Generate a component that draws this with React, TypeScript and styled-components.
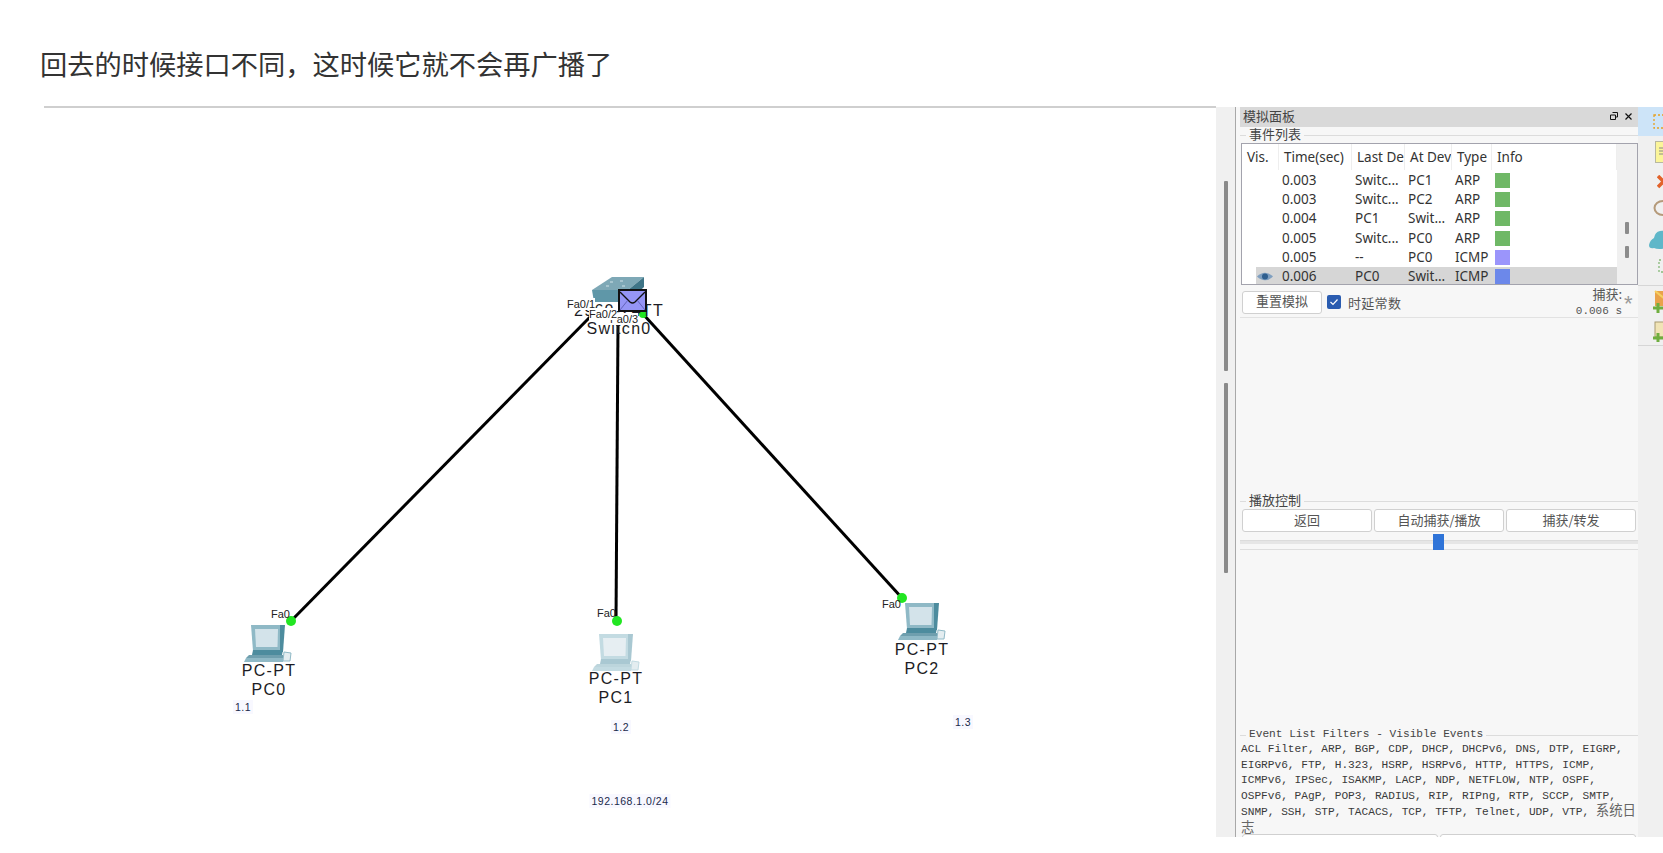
import React from 'react';
import styled, { createGlobalStyle } from 'styled-components';

const GlobalStyle = createGlobalStyle`
  html, body {
    margin: 0;
    padding: 0;
    background: #fff;
  }
  body {
    font-family: "Liberation Sans", "Noto Sans CJK SC", sans-serif;
  }
`;

const CJK = `"Noto Sans CJK SC", sans-serif`;

const Page = styled.div`
  width: 1663px;
  height: 853px;
  overflow: hidden;
  background: #fff;
`;

const Title = styled.h1`
  margin: 0;
  height: 106px;
  padding: 43px 0 0 40px;
  box-sizing: border-box;
  font: 400 27.25px/40px ${CJK};
  color: #333;
`;

const Shot = styled.div`
  margin-left: 44px;
  height: 731px;
  display: flex;
`;

/* free canvas of the simulator, page coords minus 44/108 */
const Canvas = styled.div`
  position: relative;
  width: 1172px;
  border-top: 2px solid #cfcfcf;
  background: #fff;
`;

const Cables = styled.svg`
  position: absolute;
  left: 0;
  top: 0;
`;

const At = styled.div<{ $x: number; $y: number }>`
  position: absolute;
  left: ${(p) => p.$x - 44}px;
  top: ${(p) => p.$y - 108}px;
  line-height: 0;
`;

const PortLabel = styled.span<{ $x: number; $y: number; $bg?: boolean }>`
  position: absolute;
  left: ${(p) => p.$x - 44}px;
  top: ${(p) => p.$y - 108 - 6}px;
  font-size: 11px;
  line-height: 12px;
  color: #222;
  background: ${(p) => (p.$bg ? '#fff' : 'transparent')};
`;

const DeviceLabel = styled.span<{ $x: number; $y: number }>`
  position: absolute;
  left: ${(p) => p.$x - 44}px;
  top: ${(p) => p.$y - 108 - 10}px;
  transform: translateX(-50%);
  font-size: 16px;
  line-height: 20px;
  letter-spacing: 1.3px;
  color: #1c1c24;
  white-space: nowrap;
`;

const Note = styled.span<{ $x: number; $y: number }>`
  position: absolute;
  left: ${(p) => p.$x - 44}px;
  top: ${(p) => p.$y - 108 - 8}px;
  transform: translateX(-50%);
  font-size: 10.5px;
  line-height: 14px;
  letter-spacing: 0.5px;
  padding: 0 2px;
  background: #f8f8ff;
  color: #1a2a4a;
  white-space: nowrap;
`;

const Gutter = styled.div`
  width: 19px;
  margin-top: 1px;
  background: #f0f0f0;
  border-right: 1px solid #a8a8a8;
  display: flex;
  flex-direction: column;
  align-items: center;
  padding-top: 74px;
  gap: 12px;
`;

const GutterThumb = styled.div`
  width: 4px;
  height: 190px;
  background: #8a8a8a;
  border-radius: 1px;
`;

const Panel = styled.div`
  width: 402px;
  margin-top: 1px;
  padding-left: 4px;
  box-sizing: border-box;
  background: #f7f7f7;
  display: flex;
  flex-direction: column;
  overflow: hidden;
  font-family: ${CJK};
  color: #555;
`;

const TitleBar = styled.div`
  flex: none;
  height: 20px;
  background: #d9d9d9;
  display: flex;
  align-items: center;
  justify-content: space-between;
  padding: 0 6px 2px 3px;
  box-sizing: border-box;
  font-size: 13px;
  line-height: 16px;
  color: #444;
`;

const WinButtons = styled.div`
  display: flex;
  align-items: center;
  gap: 7px;
  line-height: 0;
`;

const Legend = styled.div<{ $mono?: boolean }>`
  flex: none;
  height: 16px;
  display: flex;
  align-items: center;
  gap: 3px;
  font-size: ${(p) => (p.$mono ? '11.17px' : '13px')};
  font-family: ${(p) => (p.$mono ? '"Liberation Mono", monospace' : CJK)};
  color: #444;
  &::before {
    content: '';
    width: 6px;
    height: 1px;
    background: #dcdcdc;
  }
  &::after {
    content: '';
    flex: 1;
    height: 1px;
    background: #dcdcdc;
  }
`;

const LegendText = styled.span`
  line-height: 14px;
  margin-top: -3px;
`;

const EventTable = styled.div`
  flex: none;
  height: 142px;
  box-sizing: border-box;
  border: 1px solid #a3a3ad;
  margin-left: 1px;
  display: flex;
  background: #fff;
  overflow: hidden;
`;

const Rows = styled.div`
  width: 375px;
  font-family: "Noto Sans", sans-serif;
  font-size: 13.5px;
  color: #333;
`;

const Grid = styled.div<{ $active?: boolean }>`
  display: grid;
  grid-template-columns: 37px 73px 53px 47px 40px 125px;
  align-items: center;
  height: 19.2px;
  background: ${(p) => (p.$active ? 'linear-gradient(90deg, #fff 14px, #d6d6d6 14px)' : 'transparent')};
`;

const HeadRow = styled(Grid)`
  height: 26px;
  margin-bottom: 1px;
`;

const Head = styled.div`
  height: 100%;
  display: flex;
  align-items: center;
  padding-left: 5px;
  overflow: hidden;
  white-space: nowrap;
  border-right: 1px solid #eee;
  box-sizing: border-box;
`;

const Cell = styled.div`
  padding-left: 3px;
  white-space: nowrap;
  overflow: hidden;
  line-height: 19px;
`;

const VisCell = styled.div`
  padding-left: 15px;
  line-height: 0;
`;

const Swatch = styled.div<{ $c: string }>`
  width: 15px;
  height: 15px;
  margin-left: 3px;
  background: ${(p) => p.$c};
`;

const RailBar = styled.div`
  flex: 1;
  background: #f0f0f0;
  display: flex;
  flex-direction: column;
  align-items: center;
  padding-top: 78px;
  gap: 12px;
`;

const RailThumb = styled.div`
  width: 4px;
  height: 12px;
  background: #8c8c8c;
  border-radius: 1px;
`;

const ControlRow = styled.div`
  flex: none;
  height: 33px;
  box-sizing: border-box;
  border-bottom: 1px solid #e2e2e2;
  display: flex;
  align-items: center;
  padding: 2px 3px 0 2px;
  font-size: 13px;
`;

const PanelButton = styled.div`
  flex: 1;
  height: 23px;
  box-sizing: border-box;
  background: #fff;
  border: 1px solid #d0d0d0;
  border-radius: 3px;
  display: flex;
  align-items: center;
  justify-content: center;
  padding-bottom: 2px;
  font-size: 13px;
  line-height: 16px;
  color: #555;
`;

const ResetButton = styled(PanelButton)`
  flex: none;
  width: 80px;
`;

const Check = styled.div`
  width: 14px;
  height: 14px;
  margin-left: 5px;
  background: #2a5cb0;
  border-radius: 2px;
  display: flex;
  align-items: center;
  justify-content: center;
  line-height: 0;
`;

const CheckLabel = styled.span`
  margin-left: 7px;
  letter-spacing: 0.3px;
`;

const Readout = styled.div`
  margin-left: auto;
  text-align: right;
  font-size: 13px;
  line-height: 15px;
`;

const ReadoutValue = styled.div`
  margin-top: 3px;
  font-family: "Liberation Mono", monospace;
  font-size: 11px;
`;

const Star = styled.span`
  margin-left: 2px;
  width: 11px;
  color: #999;
  font: 22px/20px "Liberation Sans", sans-serif;
  padding-top: 4px;
`;

const Space = styled.div<{ $h: number }>`
  flex: none;
  height: ${(p) => p.$h}px;
`;

const ButtonRow = styled.div`
  flex: none;
  display: flex;
  gap: 2px;
  padding: 0 2px;
`;

const SliderBox = styled.div`
  flex: none;
  position: relative;
  height: 16px;
  margin-top: 2px;
  box-sizing: border-box;
  border-bottom: 1px solid #dedede;
  display: flex;
  flex-direction: column;
  padding-top: 6px;
`;

const SliderTrack = styled.div`
  height: 3px;
  background: #e6e6e6;
  border-top: 1px solid #dcdcdc;
`;

const SliderKnob = styled.div`
  position: absolute;
  left: 193px;
  top: 0;
  width: 11px;
  height: 16px;
  background: #2f74d8;
`;

const FilterText = styled.div`
  flex: none;
  height: 92px;
  margin-top: -1px;
  padding-left: 1px;
  font-family: "Liberation Mono", "Noto Sans CJK SC", monospace;
  font-size: 11.17px;
  line-height: 15.5px;
  color: #3a3a3a;
  white-space: pre;
`;

const CjkTail = styled.span`
  font-family: ${CJK};
  font-size: 13.4px;
  line-height: 10px;
  color: #666;
`;

const TailButton = styled(PanelButton)`
  flex: 1;
`;

const Toolbar = styled.div`
  width: 25px;
  margin-top: 1px;
  background: #f0f0f0;
  overflow: hidden;
`;

const Tool = styled.div<{ $h: number; $pl: number; $active?: boolean; $rule?: boolean }>`
  height: ${(p) => p.$h}px;
  padding-left: ${(p) => p.$pl}px;
  box-sizing: border-box;
  display: flex;
  align-items: center;
  line-height: 0;
  background: ${(p) => (p.$active ? '#cde4f8' : 'transparent')};
  border-bottom: ${(p) => (p.$rule ? '1px solid #d6d6d6' : 'none')};
  & > svg {
    flex: none;
  }
`;

const PcIcon = ({ faded = false }: { faded?: boolean }) => {
  const dark = faded ? '#a9c8d2' : '#4d8c9e';
  const mid = faded ? '#c3dbe2' : '#8fb9c6';
  const screen = faded ? '#e6eef2' : '#d3e3ea';
  const base = faded ? '#bcd5dc' : '#6f9fae';
  return (
    <svg width="50" height="40" viewBox="0 0 50 40">
      <path d="M8 2 H38 V28 H10 Z" fill={mid} />
      <path d="M37 2 H42 L40 29 H37 Z" fill={dark} />
      <path d="M12 6 H35 L34.5 24 H13 Z" fill={screen} />
      <path d="M10 27 H40 L39 32 H9 Z" fill={dark} />
      <path d="M6 32 H40 V35 H3 Z" fill={base} />
      <path d="M1 39 L3 35 H40 V39 Z" fill={mid} />
      <path d="M41 29 L48 30 L47 38 H40 Z" fill="#e4edf0" stroke={mid} strokeWidth="1" />
    </svg>
  );
};

const SwitchIcon = () => (
  <svg width="52" height="25" viewBox="0 0 52 25">
    <path d="M0 13 L20 0 H52 L36 13 Z" fill="#7ea8b6" />
    <path d="M0 13 H36 V25 H2 Z" fill="#5f97a8" />
    <path d="M36 13 L52 0 V10 L36 25 Z" fill="#3f7587" />
    <path d="M18 5 h3 M28 4 h3 M14 9 h3 M30 9 h3" stroke="#cfe2e8" strokeWidth="1" />
  </svg>
);

const Envelope = () => (
  <svg width="29" height="23" viewBox="0 0 29 23">
    <rect x="1" y="1" width="27" height="21" fill="#9595f5" stroke="#111" strokeWidth="2" />
    <path d="M2 3 L12 13 Q14.5 15 17 13 L27 3" fill="none" stroke="#111" strokeWidth="1.4" />
    <path d="M2 21 L10 11 M27 21 L19 11" stroke="#5555aa" strokeWidth="0.8" />
  </svg>
);

const EyeIcon = () => (
  <svg width="16" height="11" viewBox="0 0 16 11">
    <path d="M0 5.5 Q8 -2 16 5.5 Q8 13 0 5.5 Z" fill="#7f9fc0" />
    <circle cx="8" cy="5.5" r="3" fill="#2f5f8f" />
  </svg>
);

const events = [
  { time: '0.003', last: 'Switc...', at: 'PC1', type: 'ARP', color: '#6fb866' },
  { time: '0.003', last: 'Switc...', at: 'PC2', type: 'ARP', color: '#6fb866' },
  { time: '0.004', last: 'PC1', at: 'Swit...', type: 'ARP', color: '#6fb866' },
  { time: '0.005', last: 'Switc...', at: 'PC0', type: 'ARP', color: '#6fb866' },
  { time: '0.005', last: '--', at: 'PC0', type: 'ICMP', color: '#9b95fb' },
  { time: '0.006', last: 'PC0', at: 'Swit...', type: 'ICMP', color: '#6c88ea', active: true },
];

const filters = `ACL Filter, ARP, BGP, CDP, DHCP, DHCPv6, DNS, DTP, EIGRP,
EIGRPv6, FTP, H.323, HSRP, HSRPv6, HTTP, HTTPS, ICMP,
ICMPv6, IPSec, ISAKMP, LACP, NDP, NETFLOW, NTP, OSPF,
OSPFv6, PAgP, POP3, RADIUS, RIP, RIPng, RTP, SCCP, SMTP,
SNMP, SSH, STP, TACACS, TCP, TFTP, Telnet, UDP, VTP, `;

const App = () => {
  return (
    <Page>
      <GlobalStyle />
      <Title>回去的时候接口不同，这时候它就不会再广播了</Title>
      <Shot>
        <Canvas>
          <Cables width="1172" height="729" viewBox="44 108 1172 729">
            <g stroke="#000" strokeWidth="3" fill="none">
              <line x1="291" y1="621" x2="590" y2="317" />
              <line x1="616" y1="621" x2="618" y2="325" />
              <line x1="902" y1="598" x2="643" y2="314" />
            </g>
            <g fill="#22e622">
              <circle cx="291" cy="621" r="5" />
              <circle cx="617" cy="621" r="5" />
              <circle cx="902" cy="598" r="5" />
              <circle cx="643" cy="314" r="4" />
            </g>
          </Cables>

          <At $x={592} $y={277}><SwitchIcon /></At>
          <DeviceLabel $x={619} $y={311}>2960-24TT</DeviceLabel>
          <DeviceLabel $x={619} $y={329}>Switch0</DeviceLabel>
          <PortLabel $x={567} $y={304} $bg>Fa0/1</PortLabel>
          <PortLabel $x={610} $y={319} $bg>Fa0/3</PortLabel>
          <PortLabel $x={589} $y={314} $bg>Fa0/2</PortLabel>
          <At $x={618} $y={289}><Envelope /></At>

          <At $x={243} $y={623}><PcIcon /></At>
          <PortLabel $x={271} $y={614}>Fa0</PortLabel>
          <DeviceLabel $x={269} $y={671}>PC-PT</DeviceLabel>
          <DeviceLabel $x={269} $y={690}>PC0</DeviceLabel>
          <Note $x={243} $y={708}>1.1</Note>

          <At $x={591} $y={632}><PcIcon faded /></At>
          <PortLabel $x={597} $y={613}>Fa0</PortLabel>
          <DeviceLabel $x={616} $y={679}>PC-PT</DeviceLabel>
          <DeviceLabel $x={616} $y={698}>PC1</DeviceLabel>
          <Note $x={621} $y={728}>1.2</Note>

          <At $x={897} $y={601}><PcIcon /></At>
          <PortLabel $x={882} $y={604}>Fa0</PortLabel>
          <DeviceLabel $x={922} $y={650}>PC-PT</DeviceLabel>
          <DeviceLabel $x={922} $y={669}>PC2</DeviceLabel>
          <Note $x={963} $y={723}>1.3</Note>

          <Note $x={630} $y={802}>192.168.1.0/24</Note>
        </Canvas>

        <Gutter>
          <GutterThumb />
          <GutterThumb />
        </Gutter>

        <Panel>
          <TitleBar>
            <span>模拟面板</span>
            <WinButtons>
              <svg width="8" height="8" viewBox="0 0 8 8">
                <path d="M2.5 .5 H7.5 V5 H5.5 M.5 3 H5.5 V7.5 H.5 Z" fill="none" stroke="#111" />
              </svg>
              <svg width="7" height="7" viewBox="0 0 7 7">
                <path d="M.5 .5 L6.5 6.5 M6.5 .5 L.5 6.5" stroke="#111" strokeWidth="1.2" />
              </svg>
            </WinButtons>
          </TitleBar>

          <Legend><LegendText>事件列表</LegendText></Legend>
          <EventTable>
            <Rows>
              <HeadRow>
                <Head>Vis.</Head>
                <Head>Time(sec)</Head>
                <Head>Last De</Head>
                <Head>At Dev</Head>
                <Head>Type</Head>
                <Head>Info</Head>
              </HeadRow>
              {events.map((e, i) => (
                <Grid key={i} $active={e.active}>
                  <VisCell>{e.active && <EyeIcon />}</VisCell>
                  <Cell>{e.time}</Cell>
                  <Cell>{e.last}</Cell>
                  <Cell>{e.at}</Cell>
                  <Cell>{e.type}</Cell>
                  <Swatch $c={e.color} />
                </Grid>
              ))}
            </Rows>
            <RailBar>
              <RailThumb />
              <RailThumb />
            </RailBar>
          </EventTable>

          <ControlRow>
            <ResetButton>重置模拟</ResetButton>
            <Check>
              <svg width="10" height="8" viewBox="0 0 10 8">
                <path d="M1.5 4 L4 6.5 L8.5 1.5" fill="none" stroke="#fff" strokeWidth="1.2" />
              </svg>
            </Check>
            <CheckLabel>时延常数</CheckLabel>
            <Readout>
              捕获:
              <ReadoutValue>0.006 s</ReadoutValue>
            </Readout>
            <Star>*</Star>
          </ControlRow>

          <Space $h={175} />

          <Legend><LegendText>播放控制</LegendText></Legend>
          <ButtonRow>
            <PanelButton>返回</PanelButton>
            <PanelButton>自动捕获/播放</PanelButton>
            <PanelButton>捕获/转发</PanelButton>
          </ButtonRow>
          <SliderBox>
            <SliderTrack />
            <SliderKnob />
          </SliderBox>

          <Space $h={177} />

          <Legend $mono><LegendText>Event List Filters - Visible Events</LegendText></Legend>
          <FilterText>
            {filters}
            <CjkTail>系统日</CjkTail>
            {'\n'}
            <CjkTail>志</CjkTail>
          </FilterText>
          <ButtonRow>
            <TailButton />
            <TailButton />
          </ButtonRow>
        </Panel>

        <Toolbar>
          <Tool $h={29} $pl={15} $active>
            <svg width="14" height="15" viewBox="0 0 14 15">
              <rect x="1" y="1" width="16" height="13" fill="none" stroke="#e6a020" strokeWidth="1.3" strokeDasharray="2 2" />
            </svg>
          </Tool>
          <Tool $h={32} $pl={17}>
            <svg width="20" height="22" viewBox="0 0 20 22">
              <rect x=".5" y=".5" width="19" height="21" fill="#fbf59a" stroke="#b8b8a0" />
              <path d="M4 7 h10 M4 10 h10 M4 13 h10" stroke="#888" />
            </svg>
          </Tool>
          <Tool $h={28} $pl={19}>
            <svg width="14" height="14" viewBox="0 0 14 14">
              <path d="M1 1 L12 12 M12 1 L1 12" stroke="#e2622a" strokeWidth="3.5" />
            </svg>
          </Tool>
          <Tool $h={24} $pl={15}>
            <svg width="20" height="18" viewBox="0 0 20 18">
              <ellipse cx="10" cy="9" rx="8.5" ry="7" fill="none" stroke="#b59a7a" strokeWidth="2" />
            </svg>
          </Tool>
          <Tool $h={40} $pl={10}>
            <svg width="20" height="20" viewBox="0 0 20 20">
              <path d="M1 15 Q2 10 6 8 Q7 2 12 1 Q18 0 20 4 V18 Q10 20 6 18 Q1 19 1 15 Z" fill="#5fb7c9" />
            </svg>
          </Tool>
          <Tool $h={12} $pl={20}>
            <svg width="14" height="14" viewBox="0 0 14 14">
              <rect x="1" y="1" width="16" height="12" fill="none" stroke="#86b878" strokeWidth="1.3" strokeDasharray="2 2" />
            </svg>
          </Tool>
          <Tool $h={14} $pl={0} $rule />
          <Tool $h={32} $pl={15}>
            <svg width="20" height="24" viewBox="0 0 20 24">
              <rect x="2" y="1" width="18" height="15" fill="#e9a24a" />
              <path d="M2 1 L12 9 L20 1" fill="none" stroke="#f5d060" strokeWidth="2" />
              <path d="M0 18 h10 M5 13 v10" stroke="#6fae3f" strokeWidth="3" />
            </svg>
          </Tool>
          <Tool $h={28} $pl={15} $rule>
            <svg width="20" height="22" viewBox="0 0 20 22">
              <rect x="2" y="1" width="18" height="15" fill="#f1e4b6" stroke="#a89a70" />
              <path d="M0 17 h10 M5 12 v9" stroke="#6fae3f" strokeWidth="3" />
            </svg>
          </Tool>
        </Toolbar>
      </Shot>
    </Page>
  );
};

export default App;
